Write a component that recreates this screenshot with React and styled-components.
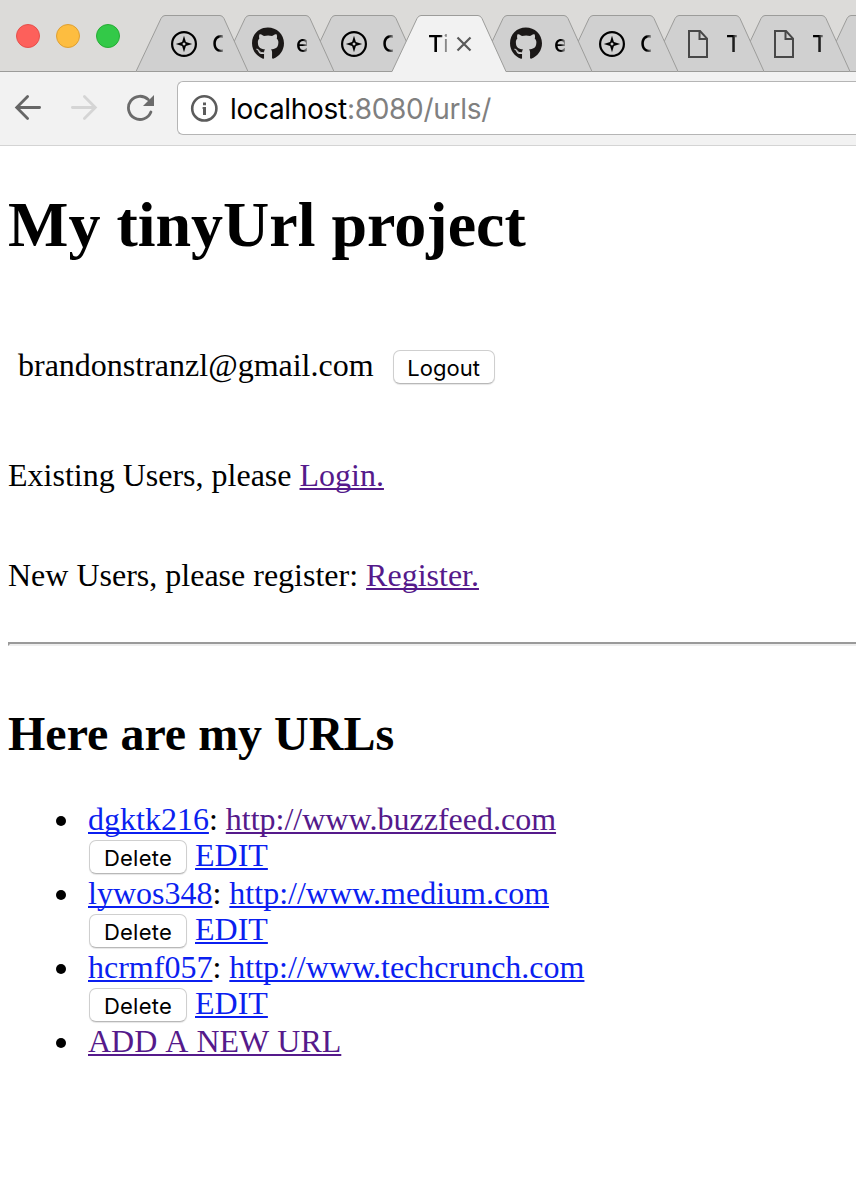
import React from "react";
import styled, { createGlobalStyle } from "styled-components";
import { FaGithub } from "react-icons/fa";

const GlobalStyle = createGlobalStyle`
  * { box-sizing: border-box; }
  body {
    margin: 0;
    background: #fff;
    color: #000;
    font: 32px/36px "Liberation Serif", serif;
    overflow: hidden;
  }
`;

const Window = styled.div`
  width: 856px;
  height: 1194px;
  overflow: hidden;
`;

const TabStrip = styled.div`
  display: flex;
  height: 72px;
  padding: 15px 0 0 16px;
  background: #dcdbd9;
  box-shadow: inset 0 -1px #9c9c9a;
  overflow: hidden;
`;

const Lights = styled.div`
  display: flex;
  gap: 16px;
  flex: none;
  width: 120px;
  padding-top: 9px;
`;

const Light = styled.span`
  width: 24px;
  height: 24px;
  border-radius: 50%;
  border: 1px solid ${(p) => p.$edge};
  background: ${(p) => p.$fill};
`;

const TabBox = styled.div`
  position: relative;
  z-index: ${(p) => p.$layer};
  display: flex;
  align-items: center;
  flex: none;
  width: ${(p) => p.$w}px;
  height: 57px;
  margin-right: -28px;
  padding-left: ${(p) => (p.$active ? 36 : 30)}px;
`;

const TabShape = styled.svg`
  position: absolute;
  top: 0;
  left: 0;
  width: 100%;
  height: 57px;
  z-index: -1;
`;

const TabIcon = styled.span`
  display: flex;
  align-items: center;
  justify-content: center;
  width: 36px;
  height: 36px;
  flex: none;
`;

const GithubMark = styled(FaGithub)`
  width: 32px;
  height: 33px;
  color: #1b1817;
`;

const TabTitle = styled.span`
  width: ${(p) => p.$w}px;
  margin-left: ${(p) => p.$gap}px;
  overflow: hidden;
  white-space: nowrap;
  font: 500 23.5px/30px Inter, sans-serif;
  mask-image: linear-gradient(to right, #000 60%, rgba(0, 0, 0, 0.3));
`;

const CloseIcon = styled.svg`
  width: 16px;
  height: 16px;
  margin-left: 9px;
  flex: none;
`;

const Toolbar = styled.div`
  display: flex;
  align-items: flex-start;
  height: 74px;
  padding-top: 9px;
  background: #f2f2f2;
  border-bottom: 1px solid #d4d4d4;
`;

const NavIcons = styled.div`
  display: flex;
  align-items: center;
  gap: 28px;
  flex: none;
  width: 177px;
  height: 54px;
  padding-left: 14px;
`;

const Omnibox = styled.div`
  display: flex;
  align-items: center;
  flex: 1;
  height: 54px;
  padding-left: 12px;
  background: #fff;
  border: 1px solid #b5b5b5;
  border-right: 0;
  border-radius: 6px 0 0 6px;
`;

const Address = styled.span`
  margin: 2px 0 0 12px;
  font: 28px/34px Inter, sans-serif;
  letter-spacing: -0.3px;
  white-space: nowrap;
`;

const Muted = styled.span`
  color: #808080;
`;

const Page = styled.main`
  padding: 42px 0 0 8px;
`;

const Title = styled.h1`
  margin: 0;
  font-size: 64px;
  line-height: 73px;
`;

const UserRow = styled.div`
  display: flex;
  gap: 19px;
  height: 38px;
  margin: 86px 0 72px;
  padding-left: 10px;
`;

const Line = styled.p`
  margin: 0 0 64px;
`;

const Rule = styled.hr`
  height: 4px;
  margin: -15px 0 61px;
  border: 2px solid;
  border-color: #9a9a9a #eee #eee #9a9a9a;
  border-right: 0;
`;

const Heading = styled.h2`
  margin: 0 0 40px;
  font-size: 48px;
  line-height: 54px;
`;

const Link = styled.a`
  color: ${(p) => (p.$visited ? "#551a8b" : "#0b1ff0")};
  text-decoration: underline;
  text-decoration-thickness: 2px;
  text-underline-offset: 2px;
  text-decoration-skip-ink: none;
`;

const AddLink = styled(Link)`
  font-kerning: none;
`;

const Button = styled.button`
  flex: none;
  width: ${(p) => p.$w}px;
  height: 34px;
  margin: 3px 0 0;
  padding: 2px 0 0;
  border: 1px solid #cfcfcf;
  border-bottom-color: #b8b8b8;
  border-radius: 7px;
  background: #fff;
  box-shadow: 0 1px 1px rgba(0, 0, 0, 0.1);
  color: #000;
  font: 22px/30px Inter, sans-serif;
  letter-spacing: ${(p) => p.$track || 0}px;
`;

const UrlList = styled.ul`
  margin: 0;
  padding: 0 0 0 48px;
  list-style: none;
`;

const UrlItem = styled.li`
  display: flex;
  gap: 22px;

  &::before {
    content: "";
    flex: none;
    width: 10px;
    height: 10px;
    margin-top: 15px;
    border-radius: 50%;
    background: #000;
  }
`;

const Actions = styled.div`
  display: flex;
  gap: 8px;
  height: 38px;
  padding-left: 1px;
`;

const CompassIcon = () => (
  <svg width="26" height="26" viewBox="0 0 26 26">
    <circle cx="13" cy="13" r="11.9" fill="none" stroke="#000" strokeWidth="2.2" />
    <path
      fillRule="evenodd"
      d="M13 4.800 14.900 11.100 21.200 13 14.900 14.900 13 21.200 11.100 14.900 4.800 13 11.100 11.100ZM13 11.200 11.200 13 13 14.800 14.800 13Z"
    />
  </svg>
);

const FileIcon = () => (
  <svg width="20" height="28" viewBox="0 0 20 28" fill="none" stroke="#484848" strokeWidth="2">
    <path d="M1 1H12L19 8.700V27H1Z" />
    <path d="M11.500 1V9H19" />
  </svg>
);

const icons = { compass: CompassIcon, github: GithubMark, file: FileIcon };

const tabs = [
  { icon: "compass", title: "C" },
  { icon: "github", title: "e" },
  { icon: "compass", title: "C" },
  { active: true, title: "Ti" },
  { icon: "github", title: "e" },
  { icon: "compass", title: "C" },
  { icon: "file", title: "T" },
  { icon: "file", title: "T" },
  { title: "" },
];

function Tab({ tab, width, layer }) {
  const Icon = icons[tab.icon];
  const face = tab.active ? "#f2f2f2" : "#d0d0d0";
  const edge = "#9c9c9a";
  const w = width;
  const outline = `M0 56.500L25 3.500Q26.500 .5 29 .5H${w - 28}Q${w - 25.500} .5 ${w - 24} 3.500L${w} 56.500`;
  return (
    <TabBox $layer={layer} $active={tab.active} $w={w}>
      <TabShape viewBox={`0 0 ${w} 57`}>
        <path d={outline} fill={face} stroke={edge} />
        <path d={`M.5 56.500H${w - 0.5}`} stroke={tab.active ? face : edge} />
      </TabShape>
      {Icon && (
        <TabIcon>
          <Icon />
        </TabIcon>
      )}
      {tab.title && (
        <TabTitle $w={tab.active ? 19 : 11} $gap={tab.active ? 0 : 10}>
          {tab.title}
        </TabTitle>
      )}
      {tab.active && (
        <CloseIcon viewBox="0 0 16 16">
          <path d="M1.500 1.500 14.500 14.500M14.500 1.500 1.500 14.500" stroke="#5a5a5a" strokeWidth="2.2" />
        </CloseIcon>
      )}
    </TabBox>
  );
}

const ArrowIcon = ({ color, flip }) => (
  <svg width="28" height="28" viewBox="0 0 28 28" fill="none" stroke={color} strokeWidth="2.8">
    <path
      d="M25.600 13.500H3M13.600 2.600 2.700 13.500 13.600 24.400"
      strokeLinecap="round"
      transform={flip ? "matrix(-1 0 0 1 28 0)" : undefined}
    />
  </svg>
);

const ReloadIcon = () => (
  <svg width="28" height="28" viewBox="0 0 28 28">
    <path
      d="M22.200 5.600A11.600 11.600 0 1 0 24.900 18"
      fill="none"
      stroke="#6b6b6b"
      strokeWidth="2.8"
      strokeLinecap="round"
    />
    <path d="M28 1V12H17Z" fill="#6b6b6b" />
  </svg>
);

const InfoIcon = () => (
  <svg width="28" height="28" viewBox="0 0 28 28">
    <circle cx="14.300" cy="14.400" r="12.100" fill="none" stroke="#5c5c5c" strokeWidth="2.600" />
    <path d="M13 8.500H16V11.300H13ZM12.600 13H16V20.900H13V15H12.600Z" fill="#5c5c5c" />
  </svg>
);

const urls = [
  { id: "dgktk216", href: "http://www.buzzfeed.com", visited: true },
  { id: "lywos348", href: "http://www.medium.com" },
  { id: "hcrmf057", href: "http://www.techcrunch.com" },
];

export default function App() {
  return (
    <Window>
      <GlobalStyle />
      <TabStrip>
        <Lights>
          <Light $fill="#fd605b" $edge="#e5504c" />
          <Light $fill="#fdbd40" $edge="#dea034" />
          <Light $fill="#33c948" $edge="#27ac35" />
        </Lights>
        {tabs.map((tab, i) => (
          <Tab key={i} tab={tab} width={i === 0 ? 112 : 114} layer={tab.active ? 20 : 10 - i} />
        ))}
      </TabStrip>
      <Toolbar>
        <NavIcons>
          <ArrowIcon color="#666" />
          <ArrowIcon color="#d5d5d5" flip />
          <ReloadIcon />
        </NavIcons>
        <Omnibox>
          <InfoIcon />
          <Address>
            localhost<Muted>:8080/urls/</Muted>
          </Address>
        </Omnibox>
      </Toolbar>
      <Page>
        <Title>My tinyUrl project</Title>
        <UserRow>
          <span>brandonstranzl@gmail.com</span>
          <Button $w={102}>Logout</Button>
        </UserRow>
        <Line>
          Existing Users, please <Link $visited>Login.</Link>
        </Line>
        <Line>
          New Users, please register: <Link $visited>Register.</Link>
        </Line>
        <Rule />
        <Heading>Here are my URLs</Heading>
        <UrlList>
          {urls.map((u) => (
            <UrlItem key={u.id}>
              <div>
                <Link>{u.id}</Link>: <Link $visited={u.visited}>{u.href}</Link>
                <Actions>
                  <Button $w={98} $track={0.25}>
                    Delete
                  </Button>
                  <Link>EDIT</Link>
                </Actions>
              </div>
            </UrlItem>
          ))}
          <UrlItem>
            <AddLink $visited>ADD A NEW URL</AddLink>
          </UrlItem>
        </UrlList>
      </Page>
    </Window>
  );
}
